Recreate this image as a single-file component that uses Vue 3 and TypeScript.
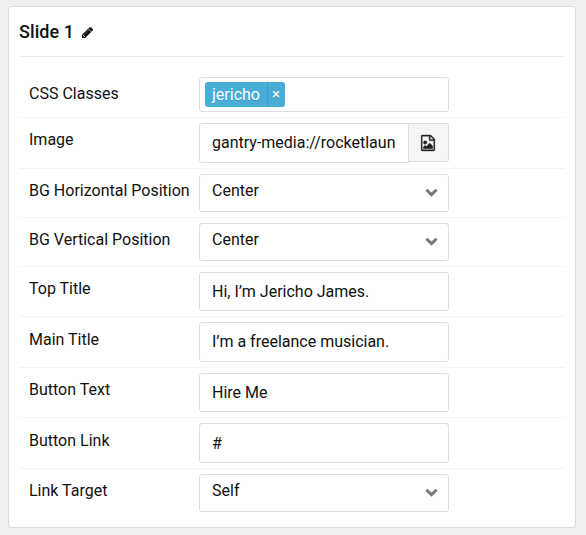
<script setup lang="ts">
type FieldKind = 'tags' | 'media' | 'select' | 'text'

interface Field {
  label: string
  kind: FieldKind
  value: string
}

const fields: Field[] = [
  { label: 'CSS Classes', kind: 'tags', value: 'jericho' },
  { label: 'Image', kind: 'media', value: 'gantry-media://rocketlaun' },
  { label: 'BG Horizontal Position', kind: 'select', value: 'Center' },
  { label: 'BG Vertical Position', kind: 'select', value: 'Center' },
  { label: 'Top Title', kind: 'text', value: 'Hi, I’m Jericho James.' },
  { label: 'Main Title', kind: 'text', value: 'I’m a freelance musician.' },
  { label: 'Button Text', kind: 'text', value: 'Hire Me' },
  { label: 'Button Link', kind: 'text', value: '#' },
  { label: 'Link Target', kind: 'select', value: 'Self' },
]
</script>

<template>
  <main class="page">
    <section class="card">
      <h4 class="card-title">
        <span class="card-name">Slide 1</span>
        <svg class="pencil" viewBox="0 0 1536 1536" aria-hidden="true">
          <path
            d="M363 1408l91-91-235-235-91 91v107h128v128h107zM886 480q0-22-22-22-10 0-17 7l-542 542q-7 7-7 17 0 22 22 22 10 0 17-7l542-542q7-7 7-17zM832 288l416 416-832 832H0v-416zM1515 384q0 53-37 90l-166 166-416-416 166-165q36-38 90-38 53 0 91 38l235 234q37 39 37 91z"
          />
        </svg>
      </h4>

      <div class="fields">
        <div v-for="field in fields" :key="field.label" class="row">
          <label class="label">{{ field.label }}</label>

          <div v-if="field.kind === 'tags'" class="control tags">
            <span class="tag">
              <span class="tag-name">{{ field.value }}</span>
              <span class="tag-remove">×</span>
            </span>
          </div>

          <div v-else-if="field.kind === 'media'" class="media">
            <div class="control media-input">{{ field.value }}</div>
            <button class="media-button" type="button" aria-label="Pick image">
              <svg class="file-image" viewBox="0 0 1536 1792" aria-hidden="true">
                <path
                  d="M1468 380q28 28 48 76t20 88v1152q0 40-28 68t-68 28H96q-40 0-68-28t-28-68V96q0-40 28-68T96 0h896q40 0 88 20t76 48zM1024 136v376h376q-10-29-22-41l-313-313q-12-12-41-22zM1408 1664V640H992q-40 0-68-28t-28-68V128H128v1536h1280zM1280 1216v320H256v-192l192-192 128 128 384-384zM448 1024q-80 0-136-56t-56-136 56-136 136-56 136 56 56 136-56 136-136 56z"
                />
              </svg>
            </button>
          </div>

          <div v-else-if="field.kind === 'select'" class="control select">
            <span>{{ field.value }}</span>
            <svg class="chevron" viewBox="0 0 12 8" aria-hidden="true">
              <path d="M1.3 1.4L6 6L10.7 1.4" />
            </svg>
          </div>

          <div v-else class="control">{{ field.value }}</div>
        </div>
      </div>
    </section>
  </main>
</template>

<style>
body {
  background: #efefef;
}
</style>

<style scoped>
.page {
  box-sizing: border-box;
  height: 535px;
  padding: 6px 10px 7px 8px;
  background: #efefef;
  color: #111;
  font: 400 16px/24px Roboto, sans-serif;
}

.card {
  box-sizing: border-box;
  height: 522px;
  padding: 0 10px;
  background: #fff;
  border: 1px solid #dcdcdc;
  border-radius: 3px;
}

.card-title {
  box-sizing: border-box;
  display: flex;
  align-items: center;
  gap: 8px;
  height: 50px;
  margin: 0 0 15px;
  border-bottom: 1px solid #ebebeb;
  font-size: 18px;
  font-weight: 500;
}

.card-name {
  letter-spacing: 0.08px;
}

.pencil {
  width: 11px;
  height: 11px;
  margin-top: 2px;
  fill: #111;
  stroke: #111;
  stroke-width: 50;
}

.fields {
  display: grid;
  grid-template-rows: 46px 51px 49px 49px 50px 51px 50px 51px 49px;
}

.row {
  box-sizing: border-box;
  display: grid;
  grid-template-columns: 170px 250px;
  padding: 5px 0 5px 10px;
  border-bottom: 1px solid #f3f3f3;
}

.row:last-child {
  border-bottom-color: transparent;
}

.label {
  padding-top: 5px;
  white-space: nowrap;
}

.row:nth-child(6) .label,
.row:nth-child(8) .label {
  padding-top: 6px;
}

.control {
  box-sizing: border-box;
  display: flex;
  align-items: flex-start;
  min-width: 0;
  padding: 7px 12px 0;
  background: #fff;
  border: 1px solid #dcdcdc;
  border-radius: 3px;
  white-space: nowrap;
}

.row:nth-child(8) .control {
  padding-top: 8px;
}

.tags {
  align-items: center;
  padding: 0 5px;
}

.tag {
  display: flex;
  height: 25px;
  background: #48aed8;
  border-radius: 3px;
  color: #fff;
  line-height: 26px;
  text-shadow: 0 1px 0 rgba(0, 0, 0, 0.15);
}

.tag-name {
  padding: 0 7px;
}

.tag-remove {
  width: 16px;
  padding-right: 1px;
  border-left: 1px solid #3b9cc5;
  font-size: 15px;
  line-height: 25px;
  text-align: center;
}

.media {
  display: flex;
}

.media-input {
  width: 210px;
  border-radius: 3px 0 0 3px;
}

.media-button {
  box-sizing: border-box;
  display: flex;
  align-items: center;
  justify-content: center;
  width: 40px;
  margin-bottom: 1px;
  padding: 1px 1px 0 0;
  background: #f5f5f5;
  border: 1px solid #dcdcdc;
  border-left: 0;
  border-radius: 0 3px 3px 0;
}

.file-image {
  width: 14px;
  height: 16px;
  fill: #222;
  stroke: #222;
  stroke-width: 40;
  overflow: visible;
}

.select {
  align-items: center;
  justify-content: space-between;
  padding: 0 10px 4px 12px;
}

.chevron {
  width: 13px;
  height: 9px;
  margin-top: 2px;
  fill: none;
  stroke: #777;
  stroke-width: 2.7;
}
</style>
